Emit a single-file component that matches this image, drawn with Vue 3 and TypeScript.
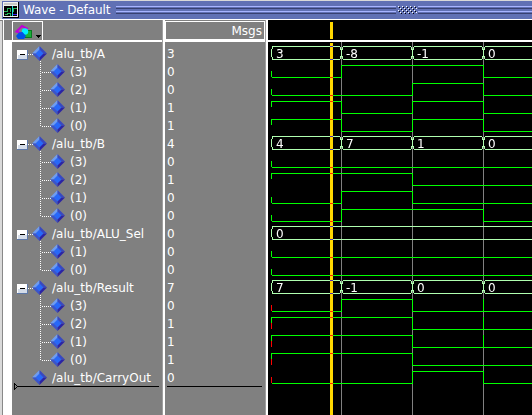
<script setup lang="ts">
type Level = 0 | 1
interface Signal {
  label: string
  value: string
  kind: 'bus' | 'bit'
  child?: boolean
  last?: boolean
  texts?: string[]
  levels?: Level[]
  unknownStart?: boolean
  glitch?: boolean
}

const bus = (label: string, value: string, texts: string[]): Signal => ({ label, value, kind: 'bus', texts })
const bit = (n: number, value: string, levels: Level[], extra: Partial<Signal> = {}): Signal => ({
  label: `(${n})`, value, kind: 'bit', child: true, last: n === 0, levels, ...extra,
})

const result = { unknownStart: true, glitch: true }
const signals: Signal[] = [
  bus('/alu_tb/A', '3', ['3', '-8', '-1', '0']),
  bit(3, '0', [0, 1, 1, 0]),
  bit(2, '0', [0, 0, 1, 0]),
  bit(1, '1', [1, 0, 1, 0]),
  bit(0, '1', [1, 0, 1, 0]),
  bus('/alu_tb/B', '4', ['4', '7', '1', '0']),
  bit(3, '0', [0, 0, 0, 0]),
  bit(2, '1', [1, 1, 0, 0]),
  bit(1, '0', [0, 1, 0, 0]),
  bit(0, '0', [0, 1, 1, 0]),
  bus('/alu_tb/ALU_Sel', '0', ['0']),
  bit(1, '0', [0, 0, 0, 0]),
  bit(0, '0', [0, 0, 0, 0]),
  bus('/alu_tb/Result', '7', ['7', '-1', '0', '0']),
  bit(3, '0', [0, 1, 0, 0], result),
  bit(2, '1', [1, 1, 0, 0], result),
  bit(1, '1', [1, 1, 0, 0], result),
  bit(0, '1', [1, 1, 0, 0], { unknownStart: true }),
  { label: '/alu_tb/CarryOut', value: '0', kind: 'bit', levels: [0, 0, 1, 0], unknownStart: true },
]

// Time positions of the value changes, in wave pane pixels
const edges = [3, 73, 144, 215]
const paneWidth = 264
const top = (i: number) => 3 + i * 18
const levelY = (i: number, l: Level) => top(i) + (l ? 2 : 14)

function bitPath(s: Signal, i: number): string {
  const lv = s.levels as Level[]
  const y0 = levelY(i, lv[0])
  let d = ''
  if (lv[0]) d = `M3.5 ${top(i) + 8}V${y0 + 0.5}`
  else d = (s.unknownStart ? '' : `M3.5 ${top(i) + 8}V${y0}`) + `M4 ${y0 + 0.5}`
  for (let k = 1; k < 4; k++) {
    const x = edges[k] + 0.5
    if (lv[k] !== lv[k - 1]) d += `H${x}V${levelY(i, lv[k]) + 0.5}`
  }
  d += `H${paneWidth}`
  if (s.glitch) d += `M215.5 ${top(i) + 2}V${top(i) + 15}`
  return d
}

function busPath(s: Signal, i: number): string {
  const t = top(i)
  const n = (s.texts as string[]).length
  let d = `M3.5 ${t + 4}V${t + 12}M4.5 ${t + 2}V${t + 4}M4.5 ${t + 12}V${t + 14}`
  for (let k = 0; k < n; k++) {
    const a = edges[k] + (k ? 2 : 1)
    const b = k + 1 < n ? edges[k + 1] - 1 : paneWidth
    d += `M${a} ${t + 1.5}H${b}M${a} ${t + 14.5}H${b}`
    if (k) {
      const x = edges[k]
      d += `M${x - 0.5} ${t + 2}V${t + 5}M${x + 1.5} ${t + 2}V${t + 5}M${x - 0.5} ${t + 11}V${t + 14}M${x + 1.5} ${t + 11}V${t + 14}M${x + 0.5} ${t + 4}V${t + 12}`
    }
  }
  return d
}
</script>

<template>
  <div class="window">
    <header class="title">
      <svg class="app-icon" width="16" height="16" shape-rendering="crispEdges">
        <rect width="16" height="16" fill="#000" />
        <rect width="15" height="15" fill="#f0f0f0" />
        <rect x="1" y="1" width="13" height="2" fill="#c8c8c8" />
        <rect x="1" y="4" width="13" height="10" fill="#000" />
        <path d="M1 9.500H4M4.500 6V10M5 6.500H7M7.500 6V10M10 6.500H14M10.500 6V10" stroke="#22b058" fill="none" />
        <path d="M2 12.500H4M4.500 11V13M5 11.500H7M7.500 11V14" stroke="#22b058" fill="none" />
        <path d="M9.500 4V14" stroke="#20d8d8" />
        <path d="M10 12.500H14" stroke="#3a20f0" />
      </svg>
      <span class="title-text">Wave - Default</span>
      <span class="grip left"></span>
      <svg class="dots" width="22" height="8" shape-rendering="crispEdges">
        <g v-for="r in 4" :key="r">
          <template v-for="c in 5" :key="c">
            <rect :x="c * 4 - 2 + (r % 2 ? 0 : 2)" :y="r * 2 - 2" width="1" height="1" fill="#fff" />
            <rect v-if="c < 5 || r % 2" :x="c * 4 - 1 + (r % 2 ? 0 : 2)" :y="r * 2 - 1" width="1" height="1" fill="#000" />
          </template>
        </g>
      </svg>
      <span class="grip right"></span>
    </header>

    <main class="panes">
      <section class="names">
        <div class="head">
          <div class="tool">
            <svg width="29" height="18">
              <path d="M3.500 9.500L9 4L14 6.500L10 12Z" fill="#808080" stroke="#c000d8" stroke-width="2" />
              <rect x="10.500" y="8.500" width="8" height="7" fill="#18b038" stroke="#087820" />
              <circle cx="12" cy="9.500" r="3.200" fill="#00f0ff" />
              <path d="M6 10.500L9.500 10L13 14L11 17H5L3 14Z" fill="#0050e8" />
              <path d="M23 13.500H28M24 14.500H27M25 15.500H26" stroke="#000" shape-rendering="crispEdges" />
            </svg>
          </div>
        </div>
        <div class="tree">
          <div class="gutter"></div>
          <div class="items">
            <div v-for="(s, i) in signals" :key="i" class="row">
              <svg class="branch" :width="s.child ? 56 : 38" height="18" shape-rendering="crispEdges">
                <template v-if="s.kind === 'bus'">
                  <rect x="5" y="5" width="11" height="10" rx="1" fill="#5d78a8" />
                  <rect x="5" y="5" width="10" height="9" fill="#fff" />
                  <rect x="6" y="10" width="9" height="4" fill="#d4dce8" />
                  <path d="M8 9.500H13" stroke="#000" />
                  <path d="M16 9.500H21" class="dotted" />
                  <path d="M28.500 16V18" class="dotted" />
                </template>
                <template v-if="s.child">
                  <path :d="s.last ? 'M28.500 0V10' : 'M28.500 0V18'" class="dotted" />
                  <path d="M30 9.500H39" class="dotted" />
                </template>
                <g :transform="`translate(${s.child ? 38 : 20} 1)`" shape-rendering="auto">
                  <path d="M7.500 0L0 7.500H7.500Z" fill="#6f9cf0" />
                  <path d="M7.500 0L15 7.500H7.500Z" fill="#3848c0" />
                  <path d="M0 7.500L7.500 15V7.500Z" fill="#3c54c8" />
                  <path d="M15 7.500L7.500 15V7.500Z" fill="#2c24a4" />
                  <path d="M7.500 3.500L11.500 7.500L7.500 11.500L3.500 7.500Z" fill="#2868f8" />
                </g>
              </svg>
              <span class="label">{{ s.label }}</span>
            </div>
            <svg class="marker" width="148" height="8" shape-rendering="crispEdges">
              <path d="M2.500 1V8M3 2.500H4M3 6.500H4M4 3.500H5M4 5.500H5" stroke="#000" />
              <path d="M5 4.500H147" stroke="#000" />
            </svg>
          </div>
        </div>
      </section>

      <section class="values">
        <div class="msgs">Msgs</div>
        <div class="list">
          <div v-for="(s, i) in signals" :key="i" class="row">{{ s.value }}</div>
          <div class="rule"></div>
        </div>
      </section>

      <section class="waves">
        <div class="ruler"><span class="cursor-head"></span></div>
        <svg class="plot" width="264" height="373" shape-rendering="crispEdges">
          <path v-for="x in edges.slice(1)" :key="x" :d="`M${x + 0.5} 0V373`" stroke="#808080" />
          <template v-for="(s, i) in signals" :key="i">
            <template v-if="s.kind === 'bus'">
              <path :d="busPath(s, i)" class="bus" />
              <text v-for="(t, k) in s.texts" :key="k" :x="edges[k] + 5" :y="top(i) + 13">{{ t }}</text>
            </template>
            <template v-else>
              <path :d="bitPath(s, i)" class="bit" />
              <path v-if="s.unknownStart" :d="`M3.5 ${top(i) + 8}v6`" class="unknown" />
            </template>
          </template>
          <rect class="cursor" x="62" y="1" width="3" height="372" />
        </svg>
      </section>
    </main>
  </div>
</template>

<style>
body {
  margin: 0;
  overflow: hidden;
}
</style>

<style scoped>
.window {
  width: 532px;
  height: 415px;
  box-sizing: border-box;
  display: flex;
  flex-direction: column;
  background: #d9d9d9;
  padding-top: 1px;
  font: 12px/18px "DejaVu Sans", sans-serif;
  color: #fff;
}
.title {
  display: flex;
  height: 18px;
  margin-left: 2px;
  background: #6070b4;
}
.app-icon {
  margin: 1px 0 0 1px;
}
.title-text {
  width: 93px;
  margin-left: 4px;
  white-space: nowrap;
  letter-spacing: -0.1px;
}
.grip {
  height: 8px;
  margin-top: 5px;
  background: linear-gradient(#a8b4ff 0 1px, #6070b4 1px 2px, #384070 2px 3px, #6070b4 3px 5px, #a8b4ff 5px 6px, #6070b4 6px 7px, #384070 7px 8px);
}
.grip.left {
  width: 280px;
}
.grip.right {
  flex: 1;
}
.dots {
  margin-top: 5px;
}
.panes {
  flex: 1;
  display: flex;
  border-top: 1px solid #fff;
  box-shadow: inset 0 1px #808080;
  min-height: 0;
}
.names {
  width: 158px;
  border-left: 1px solid #fff;
  border-right: 1px solid #a0a0a0;
  box-shadow: -1px 0 #888;
  margin-left: 3px;
  background: #808080;
}
.head {
  height: 20px;
  border-bottom: 2px solid #fff;
}
.tool {
  width: 29px;
  height: 18px;
  margin-left: 8px;
  border: 1px solid #fff;
  border-bottom: 0;
  position: relative;
  top: 1px;
}
.tool svg {
  display: block;
}
.tree {
  display: flex;
  height: 373px;
}
.gutter {
  width: 8px;
  background: #fff;
}
.items {
  padding-top: 3px;
}
.row {
  display: flex;
  height: 18px;
}
.branch {
  flex: none;
}
.label {
  padding-left: 2px;
  white-space: nowrap;
}
.dotted {
  stroke: #fff;
  stroke-dasharray: 1 1;
}
.marker {
  display: block;
  margin-top: -5px;
}
.values {
  width: 100px;
  border-left: 2px solid #fff;
  border-right: 1px solid #a0a0a0;
  background: #808080;
}
.msgs {
  height: 19px;
  margin-top: 1px;
  box-sizing: border-box;
  border: 1px solid #fff;
  text-align: right;
  padding-right: 2px;
}
.list {
  border-top: 2px solid #fff;
  padding: 3px 3px 0 2px;
}
.rule {
  height: 1px;
  margin-top: -1px;
  background: #000;
}
.waves {
  width: 264px;
  border-left: 2px solid #fff;
  background: #000;
}
.ruler {
  height: 20px;
  border-bottom: 2px solid #fff;
  display: flex;
}
.cursor-head {
  width: 3px;
  margin: 2px 0 1px 62px;
  background: #ffd700;
}
.plot {
  display: block;
  isolation: isolate;
}
.bus,
.bit,
.unknown {
  fill: none;
}
.bus {
  stroke: #b0ffb0;
}
.bit {
  stroke: #0f0;
}
.unknown {
  stroke: #f00;
}
.plot text {
  fill: #fff;
  font-size: 12px;
}
.cursor {
  fill: #ffd700;
  mix-blend-mode: difference;
}
</style>
